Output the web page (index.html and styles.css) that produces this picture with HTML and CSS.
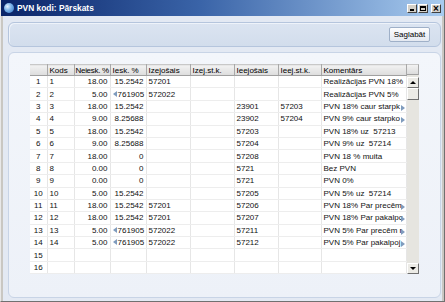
FILE: index.html
```html
<!DOCTYPE html>
<html>
<head>
    <meta charset="UTF-8">
    <title>PVN kodi: Pārskats</title>
    <link rel="stylesheet" href="styles.css">
</head>
<body>
<div class="window">
    <div class="titlebar">
        <span class="app-icon"></span>
        <span class="title">PVN kodi: Pārskats</span>
        <div class="controls">
            <span class="ctl ctl-min"><i></i></span>
            <span class="ctl ctl-max"><i></i></span>
            <span class="ctl ctl-close">&#215;</span>
        </div>
    </div>
    <div class="content">
        <div class="toolbar">
            <button class="btn">Saglabāt</button>
        </div>
        <div class="panel">
            <div class="grid">
                <table class="sheet">
                    <colgroup>
                        <col class="c-nr"><col class="c-kods"><col class="c-pct"><col class="c-pct">
                        <col class="c-acc"><col class="c-acc"><col class="c-acc"><col class="c-acc2"><col class="c-com">
                    </colgroup>
                    <thead>
                    <tr>
                        <th></th><th>Kods</th><th class="tight">Neiesk. %</th><th>Iesk. %</th><th>Izejošais</th>
                        <th>Izej.st.k.</th><th>Ieejošais</th><th>Ieej.st.k.</th><th>Komentārs</th>
                    </tr>
                    </thead>
                    <tbody>
                    <tr><td class="nr">1</td><td>1</td><td class="num">18.00</td><td class="num">15.2542</td><td>57201</td><td></td><td></td><td></td><td>Realizācijas PVN 18%</td></tr>
                    <tr><td class="nr">2</td><td>2</td><td class="num">5.00</td><td class="num"><b class="arr-l"></b>761905</td><td>572022</td><td></td><td></td><td></td><td>Realizācijas PVN 5%</td></tr>
                    <tr><td class="nr">3</td><td>3</td><td class="num">18.00</td><td class="num">15.2542</td><td></td><td></td><td>23901</td><td>57203</td><td class="cut-r"><span>PVN 18% caur starpk</span><b class="arr-r"></b></td></tr>
                    <tr><td class="nr">4</td><td>4</td><td class="num">9.00</td><td class="num">8.25688</td><td></td><td></td><td>23902</td><td>57204</td><td class="cut-r"><span>PVN 9% caur starpko</span><b class="arr-r"></b></td></tr>
                    <tr><td class="nr">5</td><td>5</td><td class="num">18.00</td><td class="num">15.2542</td><td></td><td></td><td>57203</td><td></td><td>PVN 18% uz&nbsp; 57213</td></tr>
                    <tr><td class="nr">6</td><td>6</td><td class="num">9.00</td><td class="num">8.25688</td><td></td><td></td><td>57204</td><td></td><td>PVN 9% uz&nbsp; 57214</td></tr>
                    <tr><td class="nr">7</td><td>7</td><td class="num">18.00</td><td class="num">0</td><td></td><td></td><td>57208</td><td></td><td>PVN 18 % muita</td></tr>
                    <tr><td class="nr">8</td><td>8</td><td class="num">0.00</td><td class="num">0</td><td></td><td></td><td>5721</td><td></td><td>Bez PVN</td></tr>
                    <tr><td class="nr">9</td><td>9</td><td class="num">0.00</td><td class="num">0</td><td></td><td></td><td>5721</td><td></td><td>PVN 0%</td></tr>
                    <tr><td class="nr">10</td><td>10</td><td class="num">5.00</td><td class="num">15.2542</td><td></td><td></td><td>57205</td><td></td><td>PVN 5% uz&nbsp; 57214</td></tr>
                    <tr><td class="nr">11</td><td>11</td><td class="num">18.00</td><td class="num">15.2542</td><td>57201</td><td></td><td>57206</td><td></td><td class="cut-r"><span>PVN 18% Par precēm</span><b class="arr-r"></b></td></tr>
                    <tr><td class="nr">12</td><td>12</td><td class="num">18.00</td><td class="num">15.2542</td><td>57201</td><td></td><td>57207</td><td></td><td class="cut-r"><span>PVN 18% Par pakalpc</span><b class="arr-r"></b></td></tr>
                    <tr><td class="nr">13</td><td>13</td><td class="num">5.00</td><td class="num"><b class="arr-l"></b>761905</td><td>572022</td><td></td><td>57211</td><td></td><td class="cut-r"><span>PVN 5% Par precēm r</span><b class="arr-r"></b></td></tr>
                    <tr><td class="nr">14</td><td>14</td><td class="num">5.00</td><td class="num"><b class="arr-l"></b>761905</td><td>572022</td><td></td><td>57212</td><td></td><td class="cut-r"><span>PVN 5% Par pakalpoj</span><b class="arr-r"></b></td></tr>
                    <tr><td class="nr">15</td><td></td><td></td><td></td><td></td><td></td><td></td><td></td><td></td></tr>
                    <tr><td class="nr">16</td><td></td><td></td><td></td><td></td><td></td><td></td><td></td><td></td></tr>
                    </tbody>
                </table>
                <div class="vscroll">
                    <div class="sb-head"></div>
                    <div class="sb-track">
                        <span class="sb-btn"><i class="tri-up"></i></span>
                        <span class="sb-thumb"></span>
                        <span class="sb-space"></span>
                        <span class="sb-btn"><i class="tri-down"></i></span>
                    </div>
                </div>
            </div>
        </div>
    </div>
</div>
</body>
</html>
```

FILE: styles.css
```css
*{ margin:0; padding:0; box-sizing:border-box;}
body{
    font-family:"Liberation Sans",Arial,sans-serif;
    font-size:8px;
    background:#d4d0c8;
}
.window{
    width:445px;
    height:302px;
    display:flex;
    flex-direction:column;
    background:#c9c7c2;
    border-left:1px solid #e8e8e8;
    border-right:1px solid #707070;
    border-bottom:1px solid #707070;
}
.titlebar{
    height:16px;
    display:flex;
    align-items:center;
    padding:0 3px 0 3px;
    background:linear-gradient(to right,#0a2468 0%,#3a64a8 45%,#a8cbef 100%);
    color:#fff;
}
.app-icon{
    width:10px;
    height:10px;
    border-radius:50%;
    background:radial-gradient(circle at 35% 35%,#e6f2ff 0%,#7fb4e8 40%,#2a6fc0 100%);
    margin-right:3px;
}
.title{
    font-weight:bold;
    font-size:8.4px;
    flex:1;
}
.controls{
    display:flex;
    gap:1px;
}
.ctl{
    width:10px;
    height:9px;
    background:#d4d0c8;
    border:1px solid;
    border-color:#fff #404040 #404040 #fff;
    color:#000;
    display:flex;
    align-items:center;
    justify-content:center;
}
.ctl-close{
    margin-left:2px;
    font-size:10px;
    font-weight:bold;
    line-height:7px;
}
.ctl-min i{
    width:4px;
    height:2px;
    background:#000;
    margin-top:4px;
    margin-left:-1px;
}
.ctl-max i{
    width:6px;
    height:5px;
    border:1px solid #000;
    border-top-width:2px;
}
.content{
    flex:1;
    display:flex;
    flex-direction:column;
    margin-left:2px;
    margin-right:2px;
    padding:6px 1px 3px 5px;
    background:#e3e9f3;
}
.toolbar{
    height:25px;
    display:flex;
    align-items:center;
    justify-content:flex-end;
    padding-right:10px;
    border:1px solid #b5c5dd;
    border-radius:6px;
    background:linear-gradient(#dbe4f1,#d2ddec);
    box-shadow:inset 1px 1px 0 #eef3fa;
}
.btn{
    font-family:"Liberation Sans",Arial,sans-serif;
    font-size:8px;
    width:41px;
    height:15px;
    color:#000;
    border:1px solid #9fb0c8;
    border-radius:2px;
    background:linear-gradient(#fdfdfe,#e4e9f1);
}
.panel{
    flex:1;
    margin-top:5px;
    padding:11px 0 0 21px;
    border:1px solid #c8d4e6;
    border-radius:6px;
    background:linear-gradient(#f3f6fb,#edf1f8);
}
.grid{
    display:flex;
    width:389px;
}
.sheet{
    width:376px;
    table-layout:fixed;
    border-collapse:collapse;
    background:#fff;
}
.c-nr{ width:17px;}
.c-kods{ width:27px;}
.c-pct{ width:36px;}
.c-acc{ width:44px;}
.c-acc2{ width:43px;}
.c-com{ width:85px;}
.sheet th{
    height:11px;
    font-weight:normal;
    text-align:left;
    padding:0 0 0 2px;
    white-space:nowrap;
    overflow:hidden;
    background:linear-gradient(#f2f2f2,#dcdcdc);
    border-right:1px solid #a8a8a8;
    border-bottom:1px solid #a0a0a0;
    border-top:1px solid #c8c8c8;
}
.sheet th.tight{
    padding-left:1px;
    letter-spacing:-0.3px;
}
.sheet td{
    height:12.4px;
    padding:0 2px;
    white-space:nowrap;
    overflow:hidden;
    border-right:1px solid #e6e6e6;
    border-bottom:1px solid #ededed;
    color:#111;
}
.sheet td.nr{ text-align:center;}
.sheet td.num{ text-align:right;}
.arr-l{
    display:inline-block;
    width:0;
    height:0;
    border-top:3px solid transparent;
    border-bottom:3px solid transparent;
    border-right:4px solid #7f9bbd;
    margin-right:1px;
}
.sheet td.cut-r span{
    display:inline-block;
    width:77px;
    vertical-align:top;
}
.arr-r{
    display:inline-block;
    width:0;
    height:0;
    margin-top:3px;
    vertical-align:top;
    border-top:3px solid transparent;
    border-bottom:3px solid transparent;
    border-left:4px solid #7f9bbd;
}
.vscroll{
    width:13px;
    display:flex;
    flex-direction:column;
}
.sb-head{
    height:11px;
    background:linear-gradient(#f2f2f2,#dcdcdc);
    border-top:1px solid #c8c8c8;
    border-bottom:1px solid #a0a0a0;
    border-right:1px solid #a8a8a8;
}
.sb-track{
    flex:1;
    width:12px;
    display:flex;
    flex-direction:column;
    padding-top:2px;
    background:#e6e5e0;
}
.sb-btn,.sb-thumb{
    height:11px;
    background:#ecebe6;
    border:1px solid;
    border-color:#fff #707070 #707070 #fff;
    display:flex;
    align-items:center;
    justify-content:center;
}
.sb-thumb{ height:12px;}
.sb-space{ flex:1;}
.tri-up{
    width:0;
    height:0;
    border-left:3px solid transparent;
    border-right:3px solid transparent;
    border-bottom:3px solid #000;
}
.tri-down{
    width:0;
    height:0;
    border-left:3px solid transparent;
    border-right:3px solid transparent;
    border-top:3px solid #000;
}
```
